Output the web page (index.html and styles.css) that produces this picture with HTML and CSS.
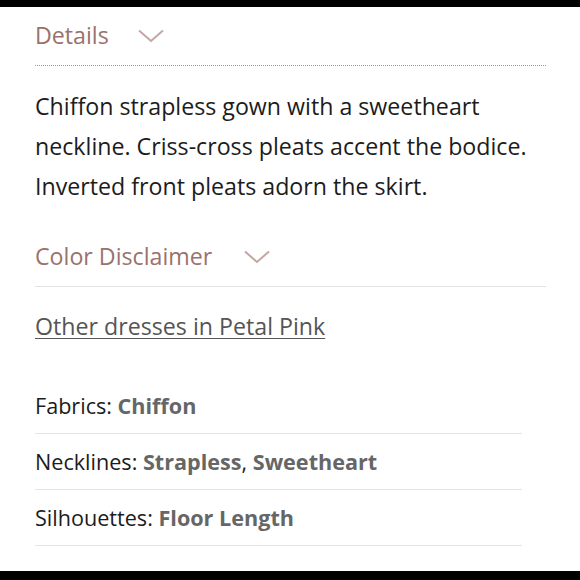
FILE: index.html
```html
<!DOCTYPE html>
<html>
<head>
<meta charset="utf-8">
<link rel="stylesheet" href="styles.css">
</head>
<body>
<div class="bar"></div>
<main class="content">
  <div class="acc-head">
    <span class="acc-title">Details</span>
    <svg class="chev" width="26" height="14" viewBox="0 0 26 14"><path d="M1 1.5 L13 12 L25 1.5" fill="none" stroke="#c4a7a3" stroke-width="2"/></svg>
  </div>
  <div class="dotted"></div>
  <p class="desc">Chiffon strapless gown with a sweetheart neckline. Criss-cross pleats accent the bodice. Inverted front pleats adorn the skirt.</p>
  <div class="acc-head acc-head2">
    <span class="acc-title">Color Disclaimer</span>
    <svg class="chev" width="26" height="14" viewBox="0 0 26 14"><path d="M1 1.5 L13 12 L25 1.5" fill="none" stroke="#c4a7a3" stroke-width="2"/></svg>
  </div>
  <div class="solid"></div>
  <a class="other" href="#">Other dresses in Petal Pink</a>
  <ul class="attrs">
    <li>Fabrics: <b>Chiffon</b></li>
    <li>Necklines: <b>Strapless</b>, <b>Sweetheart</b></li>
    <li>Silhouettes: <b>Floor Length</b></li>
  </ul>
</main>
<div class="bar bottom"></div>
</body>
</html>
```
FILE: styles.css
```css
html, body {
  margin: 0;
  padding: 0;
  background: #fff;
}
body {
  width: 580px;
  height: 580px;
  display: flex;
  flex-direction: column;
  font-family: "Open Sans", "Noto Sans", sans-serif;
  overflow: hidden;
}
.bar {
  height: 7px;
  background: #000;
  flex: none;
}
.bar.bottom {
  height: 9px;
}
.content {
  flex: 1;
  padding: 14px 34px 0 35px;
  display: flex;
  flex-direction: column;
}
.acc-head {
  display: flex;
  align-items: center;
  height: 28px;
}
.acc-title {
  font-size: 23.2px;
  color: #9a726d;
  line-height: 28px;
}
.chev {
  margin-left: 29px;
  margin-top: 1px;
}
.acc-head2 .chev {
  margin-left: 32px;
}
.dotted {
  margin-top: 16px;
  border-top: 1px dotted #999;
  width: 511px;
}
.desc {
  margin: 20px 0 0;
  font-size: 23.2px;
  line-height: 40px;
  color: #1c1c1c;
  width: 500px;
}
.acc-head2 {
  margin-top: 36px;
}
.solid {
  margin-top: 16px;
  border-top: 1px solid #e2e2e2;
  width: 511px;
}
.other {
  margin-top: 25px;
  font-size: 23.2px;
  line-height: 28px;
  color: #555;
  text-decoration: underline;
  text-decoration-thickness: 1px;
  text-underline-offset: 3px;
  align-self: flex-start;
}
.attrs {
  list-style: none;
  margin: 52px 0 0;
  padding: 0;
  width: 487px;
}
.attrs li {
  font-size: 21.6px;
  line-height: 28px;
  color: #1c1c1c;
  padding: 0 0 13px;
  margin-bottom: 14px;
  border-bottom: 1px solid #e4e4e4;
}
.attrs b {
  color: #666;
  font-weight: 700;
}
```
